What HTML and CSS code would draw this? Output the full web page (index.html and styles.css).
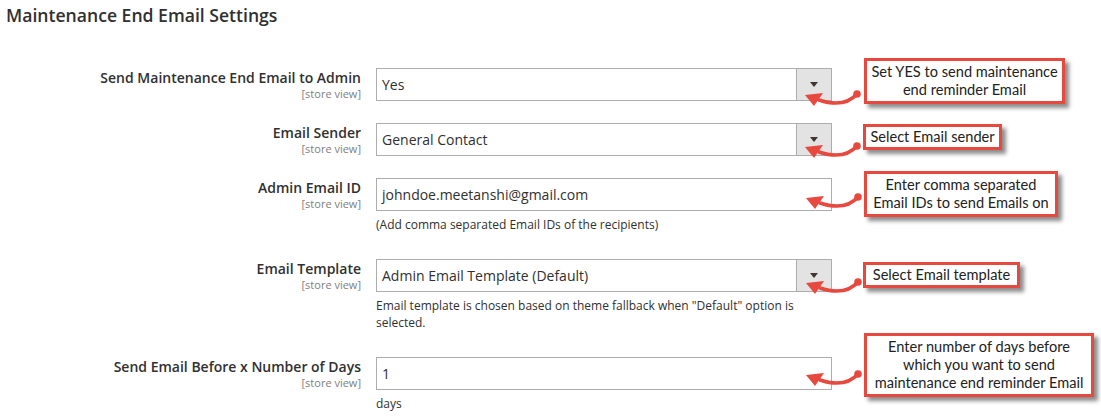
FILE: index.html
```html
<!DOCTYPE html>
<html lang="en">
<head>
  <meta charset="UTF-8" />
  <title>Maintenance End Email Settings</title>
  <link rel="stylesheet" href="styles.css">
</head>
<body>

  <h2 class="section-title">Maintenance End Email Settings</h2>

  <div class="config">
    <div class="row">
      <div class="label">
        <span class="label-text">Send Maintenance End Email to Admin</span>
        <span class="scope">[store view]</span>
      </div>
      <div class="value">
        <div class="select"><span class="select-text">Yes</span><span class="select-btn"></span></div>
      </div>
    </div>

    <div class="row">
      <div class="label">
        <span class="label-text">Email Sender</span>
        <span class="scope">[store view]</span>
      </div>
      <div class="value">
        <div class="select"><span class="select-text">General Contact</span><span class="select-btn"></span></div>
      </div>
    </div>

    <div class="row">
      <div class="label">
        <span class="label-text">Admin Email ID</span>
        <span class="scope">[store view]</span>
      </div>
      <div class="value">
        <div class="input">johndoe.meetanshi@gmail.com</div>
        <p class="note">(Add comma separated Email IDs of the recipients)</p>
      </div>
    </div>

    <div class="row">
      <div class="label">
        <span class="label-text">Email Template</span>
        <span class="scope">[store view]</span>
      </div>
      <div class="value">
        <div class="select"><span class="select-text">Admin Email Template (Default)</span><span class="select-btn"></span></div>
        <p class="note">Email template is chosen based on theme fallback when "Default" option is selected.</p>
      </div>
    </div>

    <div class="row">
      <div class="label">
        <span class="label-text">Send Email Before x Number of Days</span>
        <span class="scope">[store view]</span>
      </div>
      <div class="value">
        <div class="input">1</div>
        <p class="note">days</p>
      </div>
    </div>
  </div>

  <!-- annotations -->
  <div class="callout callout-1">Set YES to send maintenance<br>end reminder Email</div>
  <div class="callout callout-2">Select Email sender</div>
  <div class="callout callout-3">Enter comma separated<br>Email IDs to send Emails on</div>
  <div class="callout callout-4">Select Email template</div>
  <div class="callout callout-5">Enter number of days before<br>which you want to send<br>maintenance end reminder Email</div>

  <svg class="arrows" width="1101" height="418" viewBox="0 0 1101 418">
    <defs>
      <g id="arrow">
        <path d="M0 0 C-8 9 -20 12 -38 6" fill="none" stroke="#e8493f" stroke-width="3.5" stroke-linecap="round"/>
        <polygon points="-52,1 -34,-1 -43,12" fill="#e8493f"/>
        <circle cx="0" cy="0" r="3.8" fill="#e8493f"/>
      </g>
    </defs>
    <use href="#arrow" x="857" y="94"/>
    <use href="#arrow" x="857" y="146"/>
    <use href="#arrow" x="858" y="197"/>
    <use href="#arrow" x="858" y="282"/>
    <use href="#arrow" x="858" y="374"/>
  </svg>

</body>
</html>
```

FILE: styles.css
```css
body {
  margin: 0;
  font-family: 'Open Sans', sans-serif;
  background: #fff;
  color: #303030;
  position: relative;
  width: 1101px;
  height: 418px;
  overflow: hidden;
}

.section-title {
  margin: 0;
  padding: 4px 0 0 6px;
  font-size: 17.6px;
  line-height: 23px;
  font-weight: 600;
  color: #303030;
}

.config {
  padding-top: 41px;
}

.row {
  display: grid;
  grid-template-columns: 361px 456px;
  column-gap: 15px;
  margin-bottom: 22px;
}

.label {
  display: flex;
  flex-direction: column;
  align-items: flex-end;
  text-align: right;
  padding-top: 1px;
}

.label-text {
  font-size: 14px;
  line-height: 18px;
  font-weight: 600;
  color: #303030;
}

.scope {
  font-size: 11px;
  line-height: 14px;
  color: #808080;
}

.select,
.input {
  box-sizing: border-box;
  height: 33px;
  border: 1px solid #adadad;
  background: #fff;
  font-size: 14px;
  line-height: 31px;
  color: #303030;
  padding-left: 5px;
}

.select {
  display: flex;
  padding-left: 0;
}

.select-text {
  flex: 1;
  padding-left: 5px;
}

.select-btn {
  width: 34px;
  border-left: 1px solid #adadad;
  background: #e3e3e3;
  display: flex;
  align-items: center;
  justify-content: center;
}

.select-btn::after {
  content: '';
  border-left: 4px solid transparent;
  border-right: 4px solid transparent;
  border-top: 5px solid #41362f;
}

.note {
  margin: 5px 0 4px;
  font-size: 12px;
  line-height: 17px;
  color: #303030;
}

/* annotation boxes */
.callout {
  position: absolute;
  box-sizing: border-box;
  border: 3px solid #e8493f;
  background: #fff;
  box-shadow: 4px 4px 4px rgba(0, 0, 0, 0.45);
  font-family: Lato, 'Open Sans', sans-serif;
  font-size: 14.6px;
  line-height: 18px;
  color: #222;
  text-align: center;
  padding: 2px 3px;
  white-space: nowrap;
}

.callout-1 { left: 864px; top: 58px; width: 201px; }
.callout-2 { left: 863px; top: 124px; width: 139px; padding: 1px 3px; }
.callout-3 { left: 864px; top: 171px; width: 194px; }
.callout-4 { left: 863px; top: 262px; width: 157px; padding: 1px 3px; }
.callout-5 { left: 864px; top: 333px; width: 230px; }

.arrows {
  position: absolute;
  top: 0;
  left: 0;
  pointer-events: none;
}
```
